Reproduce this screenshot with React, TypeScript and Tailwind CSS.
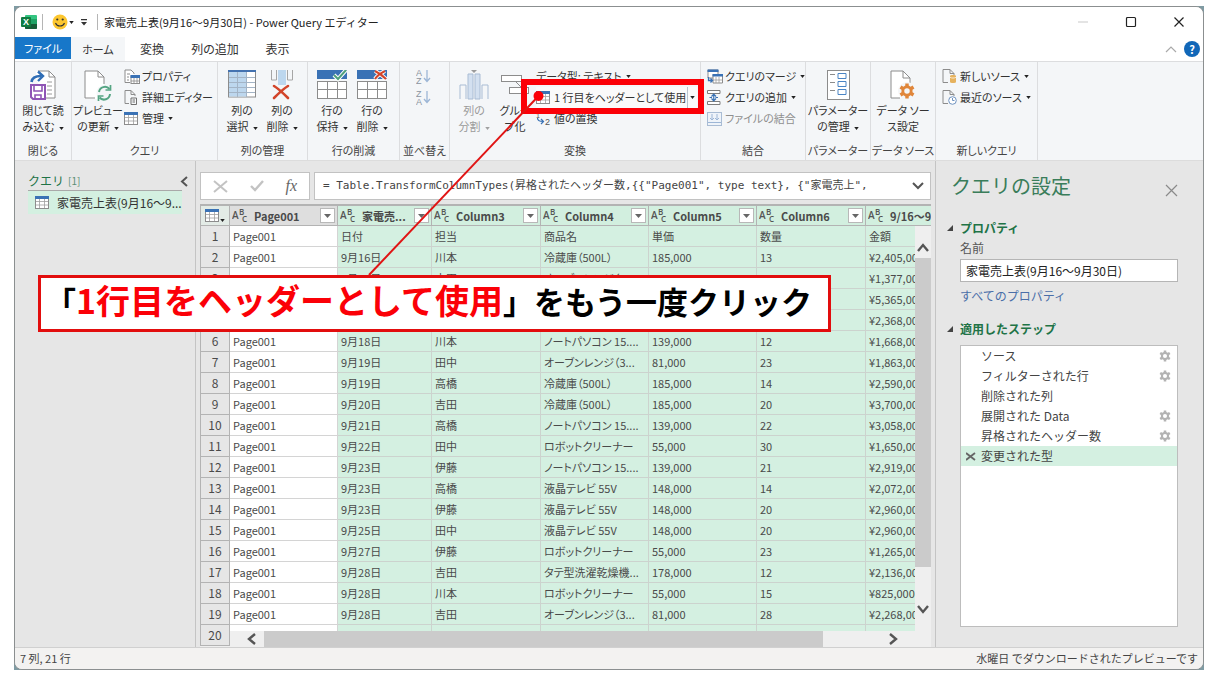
import React from "react";

type IconProps = { className?: string };

const CloseLoadIcon = () => (
  <svg width="26" height="30" viewBox="0 0 26 30" fill="none">
    <path d="M6 8V1h13l6 6v21H14" fill="#fff" />
    <path d="M8 1h11l6 6v21H16" stroke="#8c8c8c" />
    <path d="M19 1v6h6" stroke="#8c8c8c" />
    <path d="M17 12h5M17 16h5M17 20h5M17 24h5" stroke="#9a9a9a" />
    <path d="M1.500 12C2 7.500 5 6 11 6" stroke="#2f6db5" strokeWidth="2.600" />
    <path d="M8 1.500l5 4.500-5 5" stroke="#2f6db5" strokeWidth="2.400" />
    <path d="M1 15h14v14H3l-2-2z" fill="#fff" stroke="#8f55b5" strokeWidth="2" />
    <path d="M4 15v6h8v-6M5 29v-4h6v4" stroke="#8f55b5" strokeWidth="1.600" />
  </svg>
);
const RefreshDocIcon = () => (
  <svg width="28" height="31" viewBox="0 0 28 31" fill="none">
    <path d="M1 1h13l6 6v22H1z" fill="#fff" />
    <path d="M11 28H1V1h13l6 6v7" stroke="#8c8c8c" />
    <path d="M14 1v6h6" stroke="#8c8c8c" />
    <circle cx="20.500" cy="23" r="8" fill="#f4f6f8" />
    <path d="M15 22a6 6 0 0 1 10.500-3M26 24a6 6 0 0 1-10.500 3.500" stroke="#55a583" strokeWidth="2" />
    <path d="M26.500 15v5h-5M14.500 31v-5h5" stroke="#55a583" strokeWidth="1.700" />
  </svg>
);
const ColumnsPickIcon = () => (
  <svg width="28" height="28" viewBox="0 0 28 28">
    <rect x=".5" y="1" width="27" height="26" fill="#fff" stroke="#8c8c8c" />
    <rect x="1" y="2" width="18" height="24.500" fill="#bdd7ee" />
    <rect x="0" y="0" width="28" height="2" fill="#4472b0" />
    <path d="M9.500 2v25M18.500 2v25M1 7.500h26M1 12.500h26M1 17.500h26M1 22.500h26" stroke="#a3b4c6" />
  </svg>
);
const ColumnsRemoveIcon = () => (
  <svg width="24" height="30" viewBox="0 0 24 30" fill="none">
    <path d="M1.500 0v10h5V0M17.500 0v10h5V0" stroke="#a6a6a6" />
    <rect x="8" y="0" width="8" height="15" fill="#bdd7ee" />
    <path d="M4 16c5 3 10 8 14 12M18 16c-5 3-10 8-14 12" stroke="#d2452b" strokeWidth="2.600" strokeLinecap="round" />
  </svg>
);
const RowsIcon = ({ remove }: { remove?: boolean }) => (
  <svg width="30" height="29" viewBox="0 0 30 29" fill="none">
    <rect x=".5" y="11.500" width="29" height="17" fill="#fff" stroke="#8c8c8c" />
    <path d="M0 19.500h30M10.500 12v16M20.500 12v16" stroke="#8c8c8c" />
    <rect width="30" height="9" fill="#3a72b5" />
    {remove ? (
      <path d="M18 1c4 2 8 5 11 8M28 1c-4 2-8 5-10 8" stroke="#fff" strokeWidth="4" />
    ) : (
      <path d="M17 5l4 4 8-9" stroke="#fff" strokeWidth="4" />
    )}
    {remove ? (
      <path d="M18 1c4 2 8 5 11 8M28 1c-4 2-8 5-10 8" stroke="#d2452b" strokeWidth="2" />
    ) : (
      <path d="M17 5l4 4 8-9" stroke="#4fa07c" strokeWidth="2" />
    )}
  </svg>
);
const SortIcon = ({ top, bottom }: { top: string; bottom: string }) => (
  <svg width="15" height="18" viewBox="0 0 15 18" fill="none">
    <text x="0" y="8" fontSize="9" fill="#8a93a0" fontFamily="Liberation Sans">{top}</text>
    <text x="0" y="16" fontSize="9" fill="#8a93a0" fontFamily="Liberation Sans">{bottom}</text>
    <path d="M11 2v11M8 10l3 3.500 3-3.500" stroke="#9db6d6" strokeWidth="1.300" />
  </svg>
);
const SplitIcon = () => (
  <svg width="30" height="30" viewBox="0 0 30 30" fill="none">
    <path d="M12 0h6l-3 3z" fill="#9a9a9a" />
    <path d="M1 29V15h6v14M23 29V15h6v14" stroke="#a9bcd4" />
    <path d="M9 29V4h5v25zM16 29V4h5v25z" fill="#d3e0f0" stroke="#a9bcd4" />
  </svg>
);
const GroupIcon = () => (
  <svg width="28" height="30" viewBox="0 0 28 30" fill="none">
    <path d="M14 11l6 6" stroke="#8c8c8c" />
    <rect x=".5" y="5.500" width="20" height="6" fill="#fff" stroke="#8c8c8c" />
    <rect x="8.500" y="17.500" width="19" height="6" fill="#fff" stroke="#8c8c8c" />
  </svg>
);
const ParamIcon = () => (
  <svg width="23" height="30" viewBox="0 0 23 30" fill="none">
    <rect x=".5" y=".5" width="22" height="29" fill="#fff" stroke="#8c8c8c" />
    <path d="M3 4.500h5M3 12.500h5M3 20.500h5" stroke="#8c8c8c" />
    <path d="M11 3.500h8v5h-8zM11 11.500h8v5h-8zM11 19.500h8v5h-8z" stroke="#4a84c4" />
  </svg>
);
const Gear = ({ cx, cy, s, color }: { cx: number; cy: number; s: number; color: string }) => (
  <g transform={`translate(${cx} ${cy}) scale(${s})`}>
    <path
      fillRule="evenodd"
      fill={color}
      d="M-1.800-8h3.600v2.300l2 1.100L5.900-5.800l1.900 3.100-2 1.300v2.800l2 1.300-1.900 3.100-2.100-1.200-2 1.100V8h-3.600V5.700l-2-1.100-2.100 1.200-1.900-3.100 2-1.300v-2.800l-2-1.300 1.900-3.100 2.100 1.200 2-1.100zM0-2.900a2.900 2.900 0 1 0 0 5.800 2.900 2.900 0 1 0 0-5.800z"
    />
  </g>
);
const SourceGearIcon = () => (
  <svg width="26" height="30" viewBox="0 0 26 30" fill="none">
    <path d="M1 1h12l7 7v20H1z" fill="#fff" />
    <path d="M10 28H1V1h12l7 7v5M13 1v7h7" stroke="#8c8c8c" />
    <circle cx="17" cy="21" r="9" fill="#f4f6f8" />
    <Gear cx={17} cy={21} s={0.95} color="#e0863a" />
  </svg>
);
const PropsIcon = () => (
  <svg width="16" height="16" viewBox="0 0 16 16" fill="none">
    <path d="M6 13.500H1V1h6l3 3v1" fill="#fff" stroke="#8c8c8c" />
    <path d="M3 5h3M3 8h2M3 11h2" stroke="#8c8c8c" />
    <rect x="7" y="7" width="8.500" height="7.500" fill="#fff" stroke="#8c8c8c" />
    <rect x="6.500" y="6" width="9.500" height="3" fill="#3a72b5" />
    <path d="M10 9v6M13 9v6M7 12h8" stroke="#8c8c8c" strokeWidth=".8" />
  </svg>
);
const EditorIcon = () => (
  <svg width="14" height="15" viewBox="0 0 14 15" fill="none">
    <path d="M5 13.500H1V.5h6l4 4V6M7 .5v4h4" stroke="#8c8c8c" />
    <path d="M7 8h5.500v6.500H7zM8.500 10h2.500M8.500 12h2.500" stroke="#6f6f6f" />
  </svg>
);
const TableIcon = ({ className }: IconProps) => (
  <svg width="14" height="13" viewBox="0 0 14 13" fill="none" className={className}>
    <rect x=".5" y=".5" width="13" height="12" fill="#fff" stroke="#8c8c8c" />
    <path d="M4.500 2v10M9.500 2v10M1 5.500h12M1 9h12" stroke="#a0a0a0" strokeWidth=".8" />
    <rect width="14" height="3" fill="#3a72b5" />
  </svg>
);
const ReplaceIcon = () => (
  <svg width="15" height="14" viewBox="0 0 15 14" fill="none">
    <text x="0" y="6" fontSize="7" fill="#555" fontFamily="Liberation Sans">1</text>
    <text x="9" y="13" fontSize="9" fill="#555" fontFamily="Liberation Sans">2</text>
    <path d="M1.500 6c0 3 2 3.500 5.500 3.500M5 7l2.500 2.500L5 12" stroke="#3a72b5" strokeWidth="1.200" />
  </svg>
);
const MergeIcon = () => (
  <svg width="16" height="15" viewBox="0 0 16 15" fill="none">
    <path d="M1 1h10v8H1z" fill="#fff" stroke="#8c8c8c" />
    <rect x=".5" y=".5" width="11" height="2.500" fill="#3a72b5" />
    <path d="M6 5.500h9.500v8.500H6z" fill="#fff" stroke="#8c8c8c" />
    <rect x="5.500" y="5" width="10.500" height="2.500" fill="#3a72b5" />
    <path d="M9 8v6M12 8v6M6 11h9" stroke="#a0a0a0" strokeWidth=".8" />
    <path d="M1.500 8v3.500H5M3.500 9.500l2 2-2 2" stroke="#3a72b5" strokeWidth="1.300" />
  </svg>
);
const AppendIcon = () => (
  <svg width="14" height="15" viewBox="0 0 14 15" fill="none">
    <path d="M.5.500h12.500v3H.5zM.5 11.500h12.500v3H.5z" fill="#fff" stroke="#7c7c7c" />
    <path d="M6.750 4v7M4.500 6.500l2.250-2.300L9 6.500M4.500 8.500l2.250 2.300L9 8.500M2.500 7.500H5M8.500 7.500H11" stroke="#3a72b5" strokeWidth="1.200" />
  </svg>
);
const CombineIcon = () => (
  <svg width="15" height="14" viewBox="0 0 15 14" fill="none">
    <rect x=".5" y=".5" width="14" height="13" fill="#eef3f9" stroke="#a9bcd4" />
    <path d="M5 2v6M3 6l2 2 2-2M10 2v6M8 6l2 2 2-2M1 10.500h13" stroke="#9db6d6" />
  </svg>
);
const NewSourceIcon = () => (
  <svg width="15" height="15" viewBox="0 0 15 15" fill="none">
    <path d="M6 13.500H1V.5h7l4 4V6M8 .5v4h4" stroke="#8c8c8c" />
    <path d="M8 7c0-1.300 6-1.300 6 0v6c0 1.300-6 1.300-6 0z" fill="#e6b25e" />
    <path d="M8 8.300c1.500 1 4.500 1 6 0" stroke="#fff" strokeWidth=".7" />
  </svg>
);
const RecentSourceIcon = () => (
  <svg width="15" height="15" viewBox="0 0 15 15" fill="none">
    <path d="M6 13.500H1V.5h7l4 4V6M8 .5v4h4" stroke="#8c8c8c" />
    <circle cx="10.500" cy="10.500" r="3.800" fill="#fff" stroke="#6f93c0" />
    <path d="M10.500 8v2.500h2" stroke="#6f93c0" />
  </svg>
);

const Caret = ({ dim, flush }: { dim?: boolean; flush?: boolean }) => (
  <svg width="5" height="3" viewBox="0 0 6 4" className={`inline-block shrink-0 align-middle ${flush ? "" : "ml-1"}`}>
    <path d="M0 0h6L3 4z" fill={dim ? "#a0a0a0" : "#222"} />
  </svg>
);

const Chevron = ({ d, className }: { d: string; className?: string }) => (
  <svg width="12" height="12" viewBox="0 0 12 12" fill="none" className={className}>
    <path d={d} stroke="#555" strokeWidth="2.400" />
  </svg>
);

function BigButton(props: { icon: React.ReactNode; l1: string; l2: string; menu?: boolean; dim?: boolean; className: string }) {
  return (
    <button
      className={`flex shrink-0 flex-col items-center whitespace-nowrap pt-2 ${props.dim ? "text-[#9a9a9a]" : "text-[#333]"} ${props.className}`}
    >
      <span className="flex h-8 items-start">{props.icon}</span>
      <span className="leading-4">{props.l1}</span>
      <span className="leading-4">
        {props.l2}
        {props.menu && <Caret dim={props.dim} />}
      </span>
    </button>
  );
}

function SmallButton(props: { icon?: React.ReactNode; label: string; menu?: boolean; dim?: boolean }) {
  return (
    <button className={`flex h-[21px] items-center whitespace-nowrap ${props.dim ? "text-[#8f8f8f]" : "text-[#333]"}`}>
      {props.icon && <span className="flex w-[18px] shrink-0">{props.icon}</span>}
      {props.label}
      {props.menu && <Caret />}
    </button>
  );
}

function Group({ label, className, children }: { label: string; className: string; children: React.ReactNode }) {
  return (
    <section aria-label={label} className={`flex shrink-0 flex-col border-r border-[#dcdddf] ${className}`}>
      <div className="flex flex-1">{children}</div>
      <div className="whitespace-nowrap pb-[2px] text-center text-[11px] leading-4 text-[#444]">{label}</div>
    </section>
  );
}

const columns = ["Page001", "家電売...", "Column3", "Column4", "Column5", "Column6", "9/16～9"];
const rows: string[][] = [
  ["日付", "担当", "商品名", "単価", "数量", "金額"],
  ["9月16日", "川本", "冷蔵庫（500L）", "185,000", "13", "¥2,405,000"],
  ["9月16日", "吉田", "オーブンレンジ（3...", "81,000", "17", "¥1,377,000"],
  ["9月17日", "高橋", "冷蔵庫（500L）", "185,000", "29", "¥5,365,000"],
  ["9月17日", "伊藤", "液晶テレビ 55V", "148,000", "16", "¥2,368,000"],
  ["9月18日", "川本", "ノートパソコン 15....", "139,000", "12", "¥1,668,000"],
  ["9月19日", "田中", "オーブンレンジ（3...", "81,000", "23", "¥1,863,000"],
  ["9月19日", "高橋", "冷蔵庫（500L）", "185,000", "14", "¥2,590,000"],
  ["9月20日", "吉田", "冷蔵庫（500L）", "185,000", "20", "¥3,700,000"],
  ["9月21日", "高橋", "ノートパソコン 15....", "139,000", "22", "¥3,058,000"],
  ["9月22日", "田中", "ロボットクリーナー", "55,000", "30", "¥1,650,000"],
  ["9月23日", "伊藤", "ノートパソコン 15....", "139,000", "21", "¥2,919,000"],
  ["9月23日", "高橋", "液晶テレビ 55V", "148,000", "14", "¥2,072,000"],
  ["9月23日", "伊藤", "液晶テレビ 55V", "148,000", "20", "¥2,960,000"],
  ["9月25日", "田中", "液晶テレビ 55V", "148,000", "20", "¥2,960,000"],
  ["9月27日", "伊藤", "ロボットクリーナー", "55,000", "23", "¥1,265,000"],
  ["9月28日", "吉田", "タテ型洗濯乾燥機...", "178,000", "12", "¥2,136,000"],
  ["9月28日", "川本", "ロボットクリーナー", "55,000", "15", "¥825,000"],
  ["9月28日", "吉田", "オーブンレンジ（3...", "81,000", "28", "¥2,268,000"],
  ["", "", "", "", "", ""],
];

const steps = [
  { name: "ソース", gear: true },
  { name: "フィルターされた行", gear: true },
  { name: "削除された列", gear: false },
  { name: "展開された Data", gear: true },
  { name: "昇格されたヘッダー数", gear: true },
  { name: "変更された型", gear: false, active: true },
];

const TypeIcon = () => (
  <svg width="18" height="17" viewBox="0 0 18 17" className="shrink-0" fontFamily="Open Sans" fontWeight="600" fill="#555">
    <text x="0" y="12" fontSize="10">A</text>
    <text x="7" y="8" fontSize="8">B</text>
    <text x="10" y="15" fontSize="8">C</text>
  </svg>
);

function DataGrid() {
  return (
    <div className="relative mt-1 min-h-0 flex-1 overflow-hidden bg-[#efefef]">
      <table className="w-[775px] table-fixed border-separate border-spacing-0 text-left text-[11px] text-[#4a4a4a]">
        <colgroup>
          <col className="w-[30px]" />
          <col className="w-[108px]" />
          <col className="w-[94px]" />
          <col className="w-[109px]" />
          <col className="w-[108px]" />
          <col className="w-[108px]" />
          <col className="w-[109px]" />
          <col className="w-[109px]" />
        </colgroup>
        <thead>
          <tr className="h-[22px]">
            <th className="border border-t-2 border-[#b3b3b3] bg-[#e3ebe6] p-0">
              <button aria-label="テーブル" className="flex items-end gap-px pl-1">
                <TableIcon />
                <Caret flush />
              </button>
            </th>
            {columns.map((c, i) => (
              <th
                key={c}
                className={`border-b border-r border-t-2 border-b-[#b3b3b3] border-r-[#b3b3b3] border-t-[#b3b3b3] p-0 ${i === 0 ? "bg-[#dedede]" : "bg-[#d2efdf]"}`}
              >
                <div className="flex h-[19px] items-center overflow-hidden whitespace-nowrap pl-[2px]">
                  <TypeIcon />
                  <span className="ml-1 flex-1 leading-4">{c}</span>
                  <button aria-label="フィルター" className="mr-[2px] flex h-[15px] w-[15px] shrink-0 items-center justify-center border border-[#b8b8b8] bg-white">
                    <svg width="7" height="4" viewBox="0 0 7 4">
                      <path d="M0 0h7L3.500 4z" fill="#666" />
                    </svg>
                  </button>
                </div>
              </th>
            ))}
          </tr>
        </thead>
        <tbody className="[font-feature-settings:'palt']">
          {rows.map((r, i) => (
            <tr key={i} className="h-[21px]">
              <th scope="row" className="border-b border-l border-r border-[#b3b3b3] bg-[#e6e6e6] p-0 text-center text-xs leading-4 font-normal">
                {i + 1}
              </th>
              <td className="border-b border-r border-[#d4d4d4] bg-white p-0 pl-[3px] leading-4">Page001</td>
              {r.map((v, j) => (
                <td key={j} className="overflow-hidden border-b border-r border-[#ccd3ce] bg-[#d4f0e1] p-0 pl-[3px] leading-4 whitespace-nowrap">
                  {v}
                </td>
              ))}
            </tr>
          ))}
        </tbody>
      </table>
      <div className="absolute top-[22px] right-0 bottom-4 flex w-4 flex-col items-center bg-[#efefef] pt-4">
        <Chevron d="M1 9l5-6 5 6" />
        <div className="mt-1 mb-9 w-full flex-1 bg-[#cbcbcb]" />
        <Chevron d="M1 3l5 6 5-6" className="mb-4" />
      </div>
      <div className="absolute right-0 bottom-0 left-[30px] flex h-4 items-center bg-[#efefef] pl-4">
        <Chevron d="M9 1L3 6l6 5" />
        <div className="ml-[6px] h-full flex-1 bg-[#cbcbcb]" />
        <Chevron d="M3 1l6 5-6 5" className="ml-16 mr-8" />
      </div>
    </div>
  );
}

function Section({ title }: { title: string }) {
  return (
    <h3 className="flex items-center text-xs leading-4 font-bold text-[#217346]">
      <svg width="6" height="6" viewBox="0 0 6 6" className="mr-[7px]">
        <path d="M6 0v6H0z" fill="#444" />
      </svg>
      {title}
    </h3>
  );
}

export default function App() {
  return (
    <div className="flex h-screen flex-col bg-white pt-[6px] pr-3 pb-[7px] pl-[14px] font-['Noto_Sans_CJK_JP','Noto_Sans',sans-serif] text-xs text-[#333]">
      <div className="relative flex min-h-0 flex-1 flex-col bg-[#7f9ba3]">
        <div className="flex min-h-0 flex-1 flex-col overflow-hidden rounded-lg border border-[#8b8f90] bg-[#e6e6e6]">
          {/* Title bar */}
          <header className="flex h-[30px] shrink-0 items-center bg-white">
            <svg width="17" height="16" viewBox="0 0 17 16" className="ml-[6px]">
              <rect x="4" y="1" width="12" height="14" rx="1" fill="#33c481" />
              <path d="M4 5h12v5H4z" fill="#21a366" />
              <path d="M4 10h12v4a1 1 0 0 1-1 1H5a1 1 0 0 1-1-1z" fill="#185c37" />
              <rect x="0" y="3" width="10" height="10" rx="1" fill="#107c41" />
              <text x="2" y="11" fontSize="9" fontWeight="700" fill="#fff" fontFamily="Liberation Sans">X</text>
            </svg>
            <span className="ml-1 h-4 w-px bg-[#b5b5b5]" />
            <button aria-label="スマイル" className="ml-[9px] flex items-center gap-px">
              <svg width="16" height="16" viewBox="0 0 16 16" fill="none">
                <circle cx="8" cy="8" r="7.500" fill="#fcc62f" />
                <circle cx="5.300" cy="5.500" r="1.100" fill="#333" />
                <circle cx="10.700" cy="5.500" r="1.100" fill="#333" />
                <path d="M3.500 9c1.500 4 7.500 4 9 0" stroke="#333" strokeWidth="1.100" />
              </svg>
              <Caret flush />
            </button>
            <button aria-label="クイック アクセス" className="ml-[7px] flex">
              <svg width="6" height="7" viewBox="0 0 6 7">
                <path d="M0 0h6v1.200H0zM0 3h6L3 6.500z" fill="#333" />
              </svg>
            </button>
            <span className="ml-[10px] h-4 w-px bg-[#b5b5b5]" />
            <h1 className="ml-[6px] whitespace-nowrap text-[11px] text-[#222]">
              家電売上表(9月16～9月30日) - Power Query エディター
            </h1>
            <div className="ml-auto flex items-center gap-9 pr-[18px]">
              <button aria-label="最小化">
                <svg width="12" height="12" viewBox="0 0 12 12"><path d="M1 6h10" stroke="#c9c9c9" /></svg>
              </button>
              <button aria-label="最大化">
                <svg width="12" height="12" viewBox="0 0 12 12"><rect x="1.500" y="1.500" width="9" height="9" rx="1" fill="none" stroke="#222" strokeWidth="1.200" /></svg>
              </button>
              <button aria-label="閉じる">
                <svg width="12" height="12" viewBox="0 0 12 12"><path d="M1.500 1.500l9 9M10.500 1.500l-9 9" stroke="#222" strokeWidth="1.200" /></svg>
              </button>
            </div>
          </header>
          {/* Tabs */}
          <nav className="flex h-6 shrink-0 items-stretch bg-white [font-feature-settings:'palt']">
            <button className="mb-[2px] w-14 bg-[#1777c9] text-[11px] text-white">ファイル</button>
            <button className="w-[54px] bg-[#f4f6f8] text-[11px]">ホーム</button>
            <button className="w-[54px]">変換</button>
            <button className="w-[72px]">列の追加</button>
            <button className="w-[53px]">表示</button>
            <div className="ml-auto flex items-center gap-[7px] pr-[3px]">
              <button aria-label="リボンを折りたたむ">
                <svg width="12" height="8" viewBox="0 0 12 8" fill="none"><path d="M1 7l5-5 5 5" stroke="#aaa" strokeWidth="1.200" /></svg>
              </button>
              <button aria-label="ヘルプ" className="h-4 w-4 rounded-full bg-[#1167b8] text-[11px] leading-4 font-bold text-white">?</button>
            </div>
          </nav>
          {/* Ribbon */}
          <div className="flex h-[99px] shrink-0 border-t border-[#dcdddf] bg-[#f4f6f8] text-[11px] [font-feature-settings:'palt']">
            <Group label="閉じる" className="w-[57px]">
              <BigButton icon={<CloseLoadIcon />} l1="閉じて読" l2="み込む" menu className="w-14" />
            </Group>
            <Group label="クエリ" className="w-[146px]">
              <BigButton icon={<RefreshDocIcon />} l1="プレビュー" l2="の更新" menu className="w-[52px]" />
              <div className="pt-1">
                <SmallButton icon={<PropsIcon />} label="プロパティ" />
                <SmallButton icon={<EditorIcon />} label="詳細エディター" />
                <SmallButton icon={<TableIcon />} label="管理" menu />
              </div>
            </Group>
            <Group label="列の管理" className="w-[90px]">
              <BigButton icon={<ColumnsPickIcon />} l1="列の" l2="選択" menu className="ml-1 w-10" />
              <BigButton icon={<ColumnsRemoveIcon />} l1="列の" l2="削除" menu className="w-10" />
            </Group>
            <Group label="行の削減" className="w-[92px]">
              <BigButton icon={<RowsIcon />} l1="行の" l2="保持" menu className="ml-1 w-10" />
              <BigButton icon={<RowsIcon remove />} l1="行の" l2="削除" menu className="w-10" />
            </Group>
            <Group label="並べ替え" className="w-[50px]">
              <div className="flex flex-col gap-[3px] pt-[6px] pl-4">
                <button aria-label="昇順で並べ替え"><SortIcon top="A" bottom="Z" /></button>
                <button aria-label="降順で並べ替え"><SortIcon top="Z" bottom="A" /></button>
              </div>
            </Group>
            <Group label="変換" className="w-[251px]">
              <BigButton icon={<SplitIcon />} l1="列の" l2="分割" menu dim className="ml-1 w-10" />
              <BigButton icon={<GroupIcon />} l1="グルー" l2="プ化" className="w-[42px]" />
              <div className="pt-1">
                <SmallButton label="データ型: テキスト" menu />
                <div className="flex bg-[#fafafa]">
                  <button className="flex h-[21px] items-center whitespace-nowrap text-[#333]">
                    <span className="flex w-[18px]"><TableIcon /></span>
                    1 行目をヘッダーとして使用
                  </button>
                  <button aria-label="ヘッダー オプション" className="ml-px flex w-[10px] items-center justify-center border-l border-[#b9c3cd]">
                    <Caret flush />
                  </button>
                </div>
                <SmallButton icon={<ReplaceIcon />} label="値の置換" />
              </div>
            </Group>
            <Group label="結合" className="w-[105px]">
              <div className="pt-1 pl-[6px]">
                <SmallButton icon={<MergeIcon />} label="クエリのマージ" menu />
                <SmallButton icon={<AppendIcon />} label="クエリの追加" menu />
                <SmallButton icon={<CombineIcon />} label="ファイルの結合" dim />
              </div>
            </Group>
            <Group label="パラメーター" className="w-[65px]">
              <BigButton icon={<ParamIcon />} l1="パラメーター" l2="の管理" menu className="w-16" />
            </Group>
            <Group label="データ ソース" className="w-[65px]">
              <BigButton icon={<SourceGearIcon />} l1="データ ソー" l2="ス設定" className="w-16" />
            </Group>
            <Group label="新しいクエリ" className="w-[102px]">
              <div className="pt-1 pl-[6px]">
                <SmallButton icon={<NewSourceIcon />} label="新しいソース" menu />
                <SmallButton icon={<RecentSourceIcon />} label="最近のソース" menu />
              </div>
            </Group>
          </div>
          {/* Body */}
          <div className="flex min-h-0 flex-1 border-t border-[#dcdcdc]">
            <aside className="w-[181px] shrink-0 border-r border-[#c4c4c4] pt-[11px] pr-[7px] pl-[13px]">
              <div className="flex h-[18px] items-center text-[#217346]">
                クエリ <span className="ml-1 text-[10px] text-[#5c8f76]">[1]</span>
                <button aria-label="折りたたむ" className="ml-auto">
                  <svg width="8" height="11" viewBox="0 0 8 11" fill="none"><path d="M7 1L2 5.500 7 10" stroke="#555" strokeWidth="2" /></svg>
                </button>
              </div>
              <a href="#query" className="mr-[6px] flex h-6 items-center border-t border-[#a9a9a9] bg-[#d4f0e1] pl-[7px] whitespace-nowrap">
                <TableIcon className="mr-2 shrink-0" />
                家電売上表(9月16～9...
              </a>
            </aside>
            <main className="flex min-w-0 flex-1 flex-col border-r border-[#c4c4c4] pt-[11px] pr-1 pl-1">
              <div className="flex h-7 shrink-0 gap-1">
                <div className="flex w-[110px] shrink-0 items-center justify-between border border-[#c2c2c2] bg-white pr-3 pl-3">
                  <button aria-label="取り消し">
                    <svg width="15" height="13" viewBox="0 0 15 13"><path d="M1 1l13 11M14 1L1 12" stroke="#c3c3c3" strokeWidth="2" /></svg>
                  </button>
                  <button aria-label="適用">
                    <svg width="14" height="12" viewBox="0 0 14 12" fill="none"><path d="M1 6l4 4 8-9" stroke="#c3c3c3" strokeWidth="2.400" /></svg>
                  </button>
                  <button aria-label="関数" className="font-['Liberation_Serif',serif] text-base leading-5 text-[#666] italic">fx</button>
                </div>
                <div className="flex min-w-0 flex-1 items-center border border-[#c2c2c2] bg-white pr-[6px] pl-2">
                  <input
                    aria-label="数式"
                    className="min-w-0 flex-1 bg-transparent font-['DejaVu_Sans_Mono','Noto_Sans_CJK_JP',monospace] text-[11px] text-[#444] outline-none"
                    defaultValue={'= Table.TransformColumnTypes(昇格されたヘッダー数,{{"Page001", type text}, {"家電売上",'}
                  />
                  <button aria-label="数式バーを展開">
                    <svg width="12" height="8" viewBox="0 0 12 8" fill="none"><path d="M1 1l5 5 5-5" stroke="#555" strokeWidth="2" /></svg>
                  </button>
                </div>
              </div>
              <DataGrid />
            </main>
            <aside className="flex w-[267px] shrink-0 flex-col pt-[11px] pr-[25px] pl-[11px]">
              <div className="flex h-8 items-center justify-between pb-1 pl-1">
                <h2 className="text-xl text-[#3a7d5a]">クエリの設定</h2>
                <button aria-label="閉じる" className="mt-2">
                  <svg width="13" height="13" viewBox="0 0 13 13"><path d="M1 1l11 11M12 1L1 12" stroke="#8a8a8a" strokeWidth="1.200" /></svg>
                </button>
              </div>
              <div className="pt-4"><Section title="プロパティ" /></div>
              <label htmlFor="query-name" className="mt-1 pl-[13px] leading-4 text-[#555]">名前</label>
              <input
                id="query-name"
                className="mt-[3px] ml-[13px] h-[23px] shrink-0 border border-[#b5b5b5] bg-white px-[5px] text-xs text-[#222] outline-none [font-feature-settings:'palt']"
                defaultValue="家電売上表(9月16～9月30日)"
              />
              <a href="#properties" className="mt-[6px] pl-[13px] leading-4 text-[#4a6ea8]">すべてのプロパティ</a>
              <div className="pt-[17px]"><Section title="適用したステップ" /></div>
              <ul className="mt-2 mb-5 ml-[13px] min-h-0 flex-1 border border-[#bdbdbd] bg-white text-[#444]">
                {steps.map((s) => (
                  <li key={s.name} className={`flex h-5 items-center pr-[6px] pl-[5px] ${s.active ? "bg-[#d4f0e1]" : ""}`}>
                    <span className="flex w-[15px] items-center">
                      {s.active && (
                        <svg width="10" height="9" viewBox="0 0 10 9"><path d="M0 1l9 7M9 1L0 8" stroke="#666" strokeWidth="1.800" /></svg>
                      )}
                    </span>
                    {s.name}
                    {s.gear && (
                      <button aria-label={`${s.name} の設定`} className="ml-auto">
                        <svg width="12" height="12" viewBox="0 0 12 12"><Gear cx={6} cy={6} s={0.7} color="#b3b3b3" /></svg>
                      </button>
                    )}
                  </li>
                ))}
              </ul>
            </aside>
          </div>
          <footer className="flex h-[22px] shrink-0 items-center justify-between border-t border-[#d0d0d0] bg-[#f3f2f1] px-[5px] text-[11px] text-[#444]">
            <span>7 列, 21 行</span>
            <span>水曜日 でダウンロードされたプレビューです</span>
          </footer>
        </div>

        {/* Callout */}
        <div className="pointer-events-none absolute top-[73px] left-[507px] h-[35px] w-[183px] border-6 border-[#fb0007]" />
        <svg className="pointer-events-none absolute top-[84px] left-[350px]" width="180" height="190" viewBox="0 0 180 190">
          <path d="M174.500 6L5 185" stroke="#e01414" strokeWidth="2" />
          <circle cx="174.500" cy="6" r="5" fill="#fb0007" />
        </svg>
        <p className="absolute top-[269px] left-[24px] flex h-[57px] w-[793px] items-baseline border-3 border-[#e20d0d] bg-white pl-1 text-[31px] leading-[44px] font-bold whitespace-nowrap text-black">
          「<span className="text-[34px] text-[#fb0007]">1行目をヘッダーとして使用</span>」をもう一度クリック
        </p>
      </div>
    </div>
  );
}
